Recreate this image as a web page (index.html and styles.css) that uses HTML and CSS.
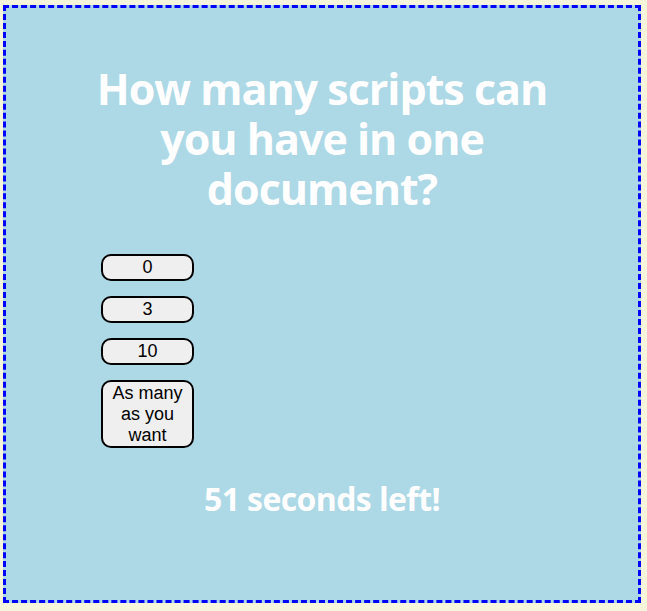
FILE: index.html
```html
<!DOCTYPE html>
<html lang="en">
<head>
<meta charset="utf-8">
<title>Quiz</title>
<link rel="stylesheet" href="styles.css">
</head>
<body>
<main class="quiz">
  <h1 class="question">How many scripts can you have in one document?</h1>
  <div class="answers">
    <button class="answer" type="button">0</button>
    <button class="answer" type="button">3</button>
    <button class="answer" type="button">10</button>
    <button class="answer" type="button">As many as you want</button>
  </div>
  <p class="timer">51 seconds left!</p>
</main>
</body>
</html>
```
FILE: styles.css
```css
html, body {
  height: 100%;
}
body {
  margin: 0;
  padding: 5px 6px 8px 3px;
  box-sizing: border-box;
  background: #f5f5dc;
}
.quiz {
  height: 100%;
  box-sizing: border-box;
  background: #add8e6;
  border: 3px dashed #0000ff;
  display: flex;
  flex-direction: column;
  padding-top: 56px;
}
.question {
  margin: 0 auto;
  max-width: 470px;
  text-align: center;
  color: #ffffff;
  font-family: "Open Sans", "Liberation Sans", sans-serif;
  font-weight: 700;
  font-size: 43px;
  line-height: 50px;
  letter-spacing: -1px;
}
.answers {
  display: flex;
  flex-direction: column;
  align-items: flex-start;
  gap: 15.4px;
  margin-top: 40px;
  padding-left: 95px;
}
.answer {
  width: 93px;
  box-sizing: border-box;
  padding: 1px 6px;
  margin: 0;
  font-family: "Liberation Sans", Arial, sans-serif;
  font-size: 18px;
  line-height: 20.7px;
  color: #000000;
  background: #efefef;
  border: 2px solid #000000;
  border-radius: 10px;
  text-align: center;
}
.timer {
  margin: 31px 0 0;
  text-align: center;
  color: #ffffff;
  font-family: "Open Sans", "Liberation Sans", sans-serif;
  font-weight: 700;
  font-size: 32px;
  line-height: 40px;
  letter-spacing: -0.6px;
}
```
